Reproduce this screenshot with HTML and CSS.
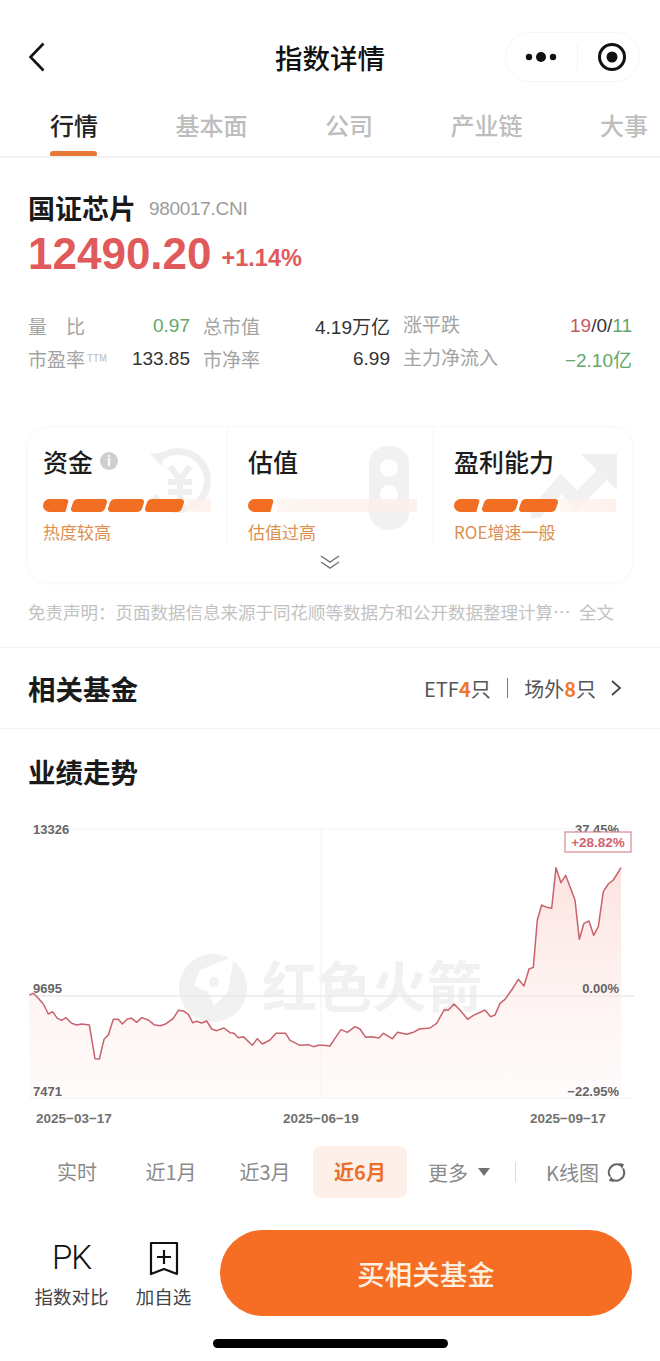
FILE: index.html
```html
<!DOCTYPE html>
<html lang="zh-CN">
<head>
    <meta charset="UTF-8">
    <meta name="viewport" content="width=device-width, initial-scale=1.0">
    <title>指数详情</title>
    <link rel="stylesheet" href="styles.css">
</head>
<body>
    <div class="page">
        <header class="navbar">
            <svg class="nav-back" width="18" height="30" viewBox="0 0 18 30"><path d="M15.5 1.5 2.5 15l13 13.500" fill="none" stroke="#111" stroke-width="2.600"/></svg>
            <h1 class="nav-title">指数详情</h1>
            <div class="capsule">
                <svg width="34" height="12" viewBox="0 0 34 12"><circle cx="5" cy="6" r="3.200" fill="#111"/><circle cx="17" cy="6" r="5" fill="#111"/><circle cx="29" cy="6" r="3.200" fill="#111"/></svg>
                <span class="capsule-sep"></span>
                <svg width="30" height="30" viewBox="0 0 30 30"><circle cx="15" cy="15" r="12.500" fill="none" stroke="#111" stroke-width="3"/><circle cx="15" cy="15" r="5.500" fill="#111"/></svg>
            </div>
        </header>

        <nav class="tabs">
            <span class="tab active">行情</span>
            <span class="tab">基本面</span>
            <span class="tab">公司</span>
            <span class="tab">产业链</span>
            <span class="tab">大事</span>
        </nav>

        <section class="summary">
            <div class="name-row">
                <h2 class="index-name">国证芯片</h2>
                <span class="index-code">980017.CNI</span>
            </div>
            <div class="price-row">
                <span class="price">12490.20</span>
                <span class="change">+1.14%</span>
            </div>
            <div class="stats">
                <div class="stat"><span>量　比</span><b class="green">0.97</b></div>
                <div class="stat"><span>总市值</span><b>4.19万亿</b></div>
                <div class="stat stat-up"><span>涨平跌</span><b><i class="red">19</i>/0/<i class="green">11</i></b></div>
                <div class="stat"><span>市盈率<small>TTM</small></span><b>133.85</b></div>
                <div class="stat"><span>市净率</span><b>6.99</b></div>
                <div class="stat stat-up"><span>主力净流入</span><b class="green">−2.10亿</b></div>
            </div>

            <div class="score-card">
                <div class="score-cols">
                    <div class="score">
                        <svg class="score-bg" style="left:118px;top:18px" width="66" height="70" viewBox="0 0 66 70">
                            <path d="M12 14A29 29 0 1 1 8 50" fill="none" stroke="#e9e9e9" stroke-width="7"/>
                            <path d="M4 8l14-2-2 14z" fill="#e9e9e9"/>
                            <path d="M24 20l10 14 10-14M22 36h24M22 46h24M34 34v24" fill="none" stroke="#e9e9e9" stroke-width="6"/>
                        </svg>
                        <h3>资金<em class="info">i</em></h3>
                        <div class="bars"><u class="first"></u><u></u><u></u><u class="wide"></u><s></s></div>
                        <p>热度较高</p>
                    </div>
                    <div class="score">
                        <svg class="score-bg" style="left:138px;top:16px" width="46" height="88" viewBox="0 0 46 88">
                            <path d="M23 2c12 0 20 7 20 18v48c0 10-8 18-20 18S3 78 3 68V20C3 9 11 2 23 2z" fill="#ececec"/>
                            <circle cx="23" cy="24" r="9" fill="#fff"/>
                            <circle cx="23" cy="50" r="9" fill="#fff"/>
                        </svg>
                        <h3>估值</h3>
                        <div class="bars"><u class="first"></u><s></s></div>
                        <p>估值过高</p>
                    </div>
                    <div class="score">
                        <svg class="score-bg" style="left:97px;top:24px" width="88" height="66" viewBox="0 0 88 66">
                            <path d="M0 66 30 32l16 16L76 18" fill="none" stroke="#ececec" stroke-width="14"/>
                            <path d="M50 2h36v36z" fill="#e8e8e8"/>
                        </svg>
                        <h3>盈利能力</h3>
                        <div class="bars"><u class="first"></u><u></u><u class="wide"></u><s></s></div>
                        <p>ROE增速一般</p>
                    </div>
                </div>
                <svg class="more-arrow" width="22" height="16" viewBox="0 0 22 16"><path d="M2 2l9 6 9-6M2 8l9 6 9-6" fill="none" stroke="#777" stroke-width="1.500"/></svg>
            </div>

            <div class="disclaimer">
                <span>免责声明：页面数据信息来源于同花顺等数据方和公开数据整理计算…</span>
                <span>全文</span>
            </div>
        </section>

        <section class="funds">
            <h2 class="section-title">相关基金</h2>
            <div class="funds-info">
                <span>ETF<b>4</b>只</span>
                <span class="funds-sep"></span>
                <span>场外<b>8</b>只</span>
                <svg width="12" height="18" viewBox="0 0 12 18"><path d="M2 2l8 7-8 7" fill="none" stroke="#444" stroke-width="1.800"/></svg>
            </div>
        </section>

        <section class="performance">
            <h2 class="section-title">业绩走势</h2>
            <svg class="chart" width="660" height="320" viewBox="0 0 660 320">
                <defs>
                    <linearGradient id="areaFill" x1="0" y1="0" x2="0" y2="1">
                        <stop offset="0" stop-color="#fbd9d4" stop-opacity=".75"/>
                        <stop offset="1" stop-color="#fdf0ee" stop-opacity=".25"/>
                    </linearGradient>
                </defs>
                <g class="watermark">
                    <circle cx="213" cy="178" r="34"/>
                    <path d="M200 160l34-14-6 36-14 14-6-14-14-6z" fill="#fff"/>
                    <circle cx="214" cy="172" r="5"/>
                    <text x="262" y="197">红色火箭</text>
                </g>
                <path class="grid-line" d="M30 19H634M30 288H634M321 19V288"/>
                <path class="zero-line" d="M30 186H634"/>
                <g transform="scale(.33333)">
                    <path fill="url(#areaFill)" d="M88 865V555L100 550 115 565 130 582 145 612 158 605 172 625 185 631 198 623 215 640 230 645 245 642 268 645 285 746 298 747 312 688 325 675 340 628 355 628 367 642 382 627 395 625 410 637 425 623 445 630 462 644 480 647 495 643 520 625 535 601 550 603 565 613 578 638 590 634 605 639 620 633 635 657 650 662 672 654 690 668 702 670 715 683 730 680 757 706 772 686 787 702 810 690 828 670 857 670 870 691 900 706 925 704 940 710 955 706 970 706 990 708 1005 685 1023 659 1042 667 1065 650 1080 657 1097 682 1115 680 1137 684 1150 670 1177 686 1193 667 1220 673 1240 667 1258 657 1290 654 1310 640 1333 599 1345 600 1362 582 1380 600 1403 628 1420 616 1455 600 1472 620 1485 615 1500 580 1515 568 1535 540 1555 508 1572 528 1587 477 1600 472 1612 330 1625 285 1640 292 1655 295 1668 173 1683 218 1697 196 1725 270 1738 388 1752 340 1767 333 1781 376 1795 350 1810 245 1825 222 1840 210 1863 173V865Z"/>
                    <polyline class="price-line" points="88,555 100,550 115,565 130,582 145,612 158,605 172,625 185,631 198,623 215,640 230,645 245,642 268,645 285,746 298,747 312,688 325,675 340,628 355,628 367,642 382,627 395,625 410,637 425,623 445,630 462,644 480,647 495,643 520,625 535,601 550,603 565,613 578,638 590,634 605,639 620,633 635,657 650,662 672,654 690,668 702,670 715,683 730,680 757,706 772,686 787,702 810,690 828,670 857,670 870,691 900,706 925,704 940,710 955,706 970,706 990,708 1005,685 1023,659 1042,667 1065,650 1080,657 1097,682 1115,680 1137,684 1150,670 1177,686 1193,667 1220,673 1240,667 1258,657 1290,654 1310,640 1333,599 1345,600 1362,582 1380,600 1403,628 1420,616 1455,600 1472,620 1485,615 1500,580 1515,568 1535,540 1555,508 1572,528 1587,477 1600,472 1612,330 1625,285 1640,292 1655,295 1668,173 1683,218 1697,196 1725,270 1738,388 1752,340 1767,333 1781,376 1795,350 1810,245 1825,222 1840,210 1863,173"/>
                </g>
                <text class="axis" x="33" y="24">13326</text>
                <text class="axis" x="33" y="183">9695</text>
                <text class="axis" x="33" y="286">7471</text>
                <text class="axis end" x="619" y="24">37.45%</text>
                <text class="axis end" x="619" y="183">0.00%</text>
                <text class="axis end" x="619" y="286">−22.95%</text>
                <text class="axis date" x="36" y="313">2025−03−17</text>
                <text class="axis date" x="283" y="313">2025−06−19</text>
                <text class="axis date" x="530" y="313">2025−09−17</text>
                <rect class="tag-box" x="565" y="22" width="66" height="20"/>
                <text class="tag-text" x="598" y="37">+28.82%</text>
            </svg>

            <div class="periods">
                <span class="period">实时</span>
                <span class="period">近1月</span>
                <span class="period">近3月</span>
                <span class="period active">近6月</span>
                <span class="period-more">更多<i class="caret"></i></span>
                <span class="period-sep"></span>
                <span class="period-kline">K线图
                    <svg width="21" height="21" viewBox="0 0 21 21"><path d="M4 14.500A8 8 0 0 1 15 3.500M17 6.500A8 8 0 0 1 6 17.500" fill="none" stroke="#666" stroke-width="2.200"/><path d="M13 1l5 1-2 5zM8 20l-5-1 2-5z" fill="#666"/></svg>
                </span>
            </div>
        </section>

        <footer class="actions">
            <div class="action action-pk">
                <span class="pk">PK</span>
                <span class="action-label">指数对比</span>
            </div>
            <div class="action action-add">
                <svg width="32" height="36" viewBox="0 0 32 36"><path d="M3 2h26v31l-13-5-13 5z" fill="none" stroke="#111" stroke-width="2.200" stroke-linejoin="round"/><path d="M16 9v14M9 16h14" fill="none" stroke="#111" stroke-width="2.200"/></svg>
                <span class="action-label">加自选</span>
            </div>
            <div class="buy">买相关基金</div>
        </footer>
        <div class="home-bar"></div>
    </div>
</body>
</html>
```

FILE: styles.css
```css
* {
    margin: 0;
    padding: 0;
    box-sizing: border-box;
}

body {
    font-family: "Noto Sans CJK SC", "Liberation Sans", sans-serif;
    background: #fff;
    color: #222;
}

.page {
    width: 660px;
    height: 1361px;
    overflow: hidden;
    padding-top: 32px;
}

/* top bar */
.navbar {
    height: 50px;
    position: relative;
    display: flex;
    align-items: center;
    justify-content: center;
}

.nav-back {
    position: absolute;
    left: 28px;
    top: 10px;
}

.nav-title {
    font-size: 27.500px;
    font-weight: 500;
    color: #111;
}

.capsule {
    position: absolute;
    left: 505px;
    top: 0;
    width: 135px;
    height: 50px;
    border: 1px solid #f6f6f6;
    border-radius: 25px;
    display: flex;
    align-items: center;
    padding-left: 18px;
}

.capsule-sep {
    width: 1px;
    height: 26px;
    background: #f4f4f4;
    margin: 0 19px 0 19px;
}

/* tabs */
.tabs {
    height: 76px;
    padding: 26px 0 0 50px;
    display: flex;
    gap: 77.500px;
    border-bottom: 2px solid #f3f3f3;
    overflow: hidden;
    white-space: nowrap;
}

.tab {
    position: relative;
    height: 34px;
    line-height: 34px;
    font-size: 24px;
    font-weight: 500;
    color: #bdbdbd;
}

.tab.active {
    color: #222;
}

.tab.active::after {
    content: "";
    position: absolute;
    left: 0;
    right: 1px;
    top: 43px;
    height: 6px;
    border-radius: 3px;
    background: #e67a35;
}

/* index summary */
.summary {
    padding: 32px 28px 0;
}

.name-row {
    height: 34px;
    display: flex;
    align-items: center;
}

.index-name {
    font-size: 27px;
    font-weight: 700;
    color: #1a1a1a;
}

.index-code {
    margin-left: 13px;
    margin-top: 4px;
    font-family: "Liberation Sans", sans-serif;
    font-size: 19px;
    letter-spacing: -0.300px;
    color: #9c9c9c;
}

.price-row {
    height: 60px;
    display: flex;
    align-items: center;
    font-family: "Liberation Sans", sans-serif;
    font-weight: 700;
    color: #e05a5c;
}

.price {
    font-size: 44px;
}

.change {
    margin: 8px 0 0 10px;
    font-size: 23.500px;
}

.stats {
    margin-top: 25px;
    display: grid;
    grid-template-columns: 162px 187px 229px;
    column-gap: 13px;
    grid-auto-rows: 33px;
    font-size: 19px;
}

.stat {
    display: flex;
    justify-content: space-between;
    align-items: center;
    color: #a3a3a3;
}

.stat span {
    white-space: nowrap;
}

.stat small {
    font-size: 10px;
    margin-left: 2px;
    vertical-align: 5px;
    color: #bbb;
}

.stat b {
    font-family: "Liberation Sans", "Noto Sans CJK SC", sans-serif;
    font-weight: 400;
    font-size: 19px;
    color: #333;
}

.stat i {
    font-style: normal;
}

.stat-up span {
    margin-top: -4px;
}

.stat .green {
    color: #62a869;
}

.stat .red {
    color: #c9565f;
}

/* three score columns */
.score-card {
    margin-top: 53px;
    height: 154px;
    border-radius: 20px;
    background: #fff;
    box-shadow: 0 0 6px rgba(0, 0, 0, 0.05);
    overflow: hidden;
}

.score-cols {
    display: grid;
    grid-template-columns: 199px 206px 199px;
    height: 116px;
}

.score {
    position: relative;
    padding: 18px 0 0 20px;
    border-left: 1px solid #f5f5f5;
}

.score:first-child {
    padding-left: 15px;
    border-left: 0;
}

.score-bg {
    position: absolute;
    opacity: 0.7;
}

.score h3 {
    position: relative;
    height: 30px;
    line-height: 30px;
    font-size: 25px;
    font-weight: 500;
    color: #1c1c1c;
    display: flex;
    align-items: center;
}

.info {
    width: 18px;
    height: 18px;
    margin-left: 7px;
    border-radius: 50%;
    background: #cfcfcf;
    color: #fff;
    font-size: 13px;
    font-weight: 700;
    font-style: normal;
    line-height: 18px;
    text-align: center;
}

.bars {
    position: relative;
    margin: 23px 16px 0 0;
    height: 13px;
    display: flex;
    gap: 3px;
}

.bars u {
    width: 34px;
    border-radius: 4px;
    background: #f26e23;
    transform: skewX(-18deg);
}

.bars .first {
    width: 26px;
    border-radius: 7px 4px 4px 7px;
    transform: none;
    clip-path: polygon(0 0, 100% 0, 86% 100%, 0 100%);
}

.bars .wide {
    width: 37px;
}

.bars s {
    flex: 1;
    background: linear-gradient(90deg, #fdf3ee, #fdeee8);
    opacity: 0.8;
}

.score p {
    position: relative;
    margin-top: 8px;
    height: 24px;
    line-height: 24px;
    font-size: 17px;
    color: #dd8f52;
}

.more-arrow {
    display: block;
    margin: 10px auto 0;
}

.disclaimer {
    margin-top: 18px;
    height: 24px;
    line-height: 24px;
    font-size: 17.500px;
    color: #c2c2c2;
    display: flex;
    justify-content: space-between;
    padding-right: 18px;
    white-space: nowrap;
}

/* related funds */
.funds {
    margin-top: 23px;
    height: 82px;
    padding: 0 38px 0 28px;
    border-top: 1px solid #f3f3f3;
    border-bottom: 1px solid #f3f3f3;
    display: flex;
    align-items: center;
    justify-content: space-between;
}

.section-title {
    font-size: 27.500px;
    font-weight: 700;
    line-height: 32px;
    color: #1a1a1a;
}

.funds-info {
    display: flex;
    align-items: center;
    font-size: 20px;
    color: #555;
}

.funds-info b {
    color: #ee7a30;
    font-weight: 700;
}

.funds-sep {
    width: 1.500px;
    height: 20px;
    margin: 0 16px;
    background: #777;
}

.funds-info svg {
    margin-left: 14px;
}

/* chart */
.performance .section-title {
    padding: 26px 0 0 28px;
    height: 81px;
}

.chart {
    display: block;
    font-family: "Liberation Sans", sans-serif;
}

.watermark {
    fill: #f1f1f1;
}

.watermark text {
    font-family: "Noto Sans CJK SC", sans-serif;
    font-size: 55px;
    font-weight: 700;
}

.grid-line {
    fill: none;
    stroke: #f4f4f4;
    stroke-width: 1.200;
}

.zero-line {
    fill: none;
    stroke: #e9e9e9;
    stroke-width: 1.500;
}

.price-line {
    fill: none;
    stroke: #c8626c;
    stroke-width: 4.500;
    stroke-linejoin: round;
}

.axis {
    font-size: 13px;
    font-weight: 700;
    fill: #666;
}

.axis.end {
    text-anchor: end;
}

.axis.date {
    font-size: 13.500px;
    fill: #707070;
}

.tag-box {
    fill: #fff;
    stroke: #d58a93;
    stroke-width: 1.200;
}

.tag-text {
    font-size: 13.500px;
    font-weight: 700;
    text-anchor: middle;
    fill: #d0636e;
}

/* period switch */
.periods {
    margin-top: 16px;
    height: 52px;
    padding-left: 30px;
    display: flex;
    align-items: center;
    font-size: 20px;
    color: #8a8a8a;
}

.period {
    width: 94px;
    height: 52px;
    line-height: 52px;
    text-align: center;
}

.period.active {
    margin-left: 1px;
    border-radius: 8px;
    background: #fdf0e8;
    color: #e8702c;
    font-weight: 700;
}

.period-more {
    margin-left: 21px;
    display: flex;
    align-items: center;
}

.caret {
    width: 0;
    height: 0;
    margin-left: 10px;
    border-left: 6px solid transparent;
    border-right: 6px solid transparent;
    border-top: 8px solid #707070;
}

.period-sep {
    width: 1px;
    height: 20px;
    margin: 0 30px 0 25px;
    background: #ddd;
}

.period-kline {
    display: flex;
    align-items: center;
    gap: 7px;
    white-space: nowrap;
}

/* bottom actions */
.actions {
    margin-top: 32px;
    height: 86px;
    padding-left: 28px;
    display: flex;
}

.action {
    height: 86px;
    padding-top: 9px;
    display: flex;
    flex-direction: column;
    align-items: center;
}

.action-pk {
    width: 87px;
}

.action-add {
    width: 97px;
    padding-top: 11px;
}

.pk {
    height: 38px;
    line-height: 38px;
    font-family: Roboto, sans-serif;
    font-weight: 300;
    font-size: 33px;
    letter-spacing: -1px;
    color: #111;
}

.action-label {
    margin-top: 6px;
    height: 26px;
    line-height: 26px;
    font-size: 18.500px;
    color: #444;
    white-space: nowrap;
}

.action-add .action-label {
    margin-top: 6px;
}

.buy {
    width: 412px;
    height: 86px;
    margin-left: 8px;
    border-radius: 43px;
    background: #f56e24;
    color: #fdf0e0;
    font-size: 27.500px;
    font-weight: 500;
    line-height: 86px;
    text-align: center;
}

.home-bar {
    width: 235px;
    height: 9px;
    margin: 23px 0 0 213px;
    border-radius: 5px;
    background: #000;
}
```
